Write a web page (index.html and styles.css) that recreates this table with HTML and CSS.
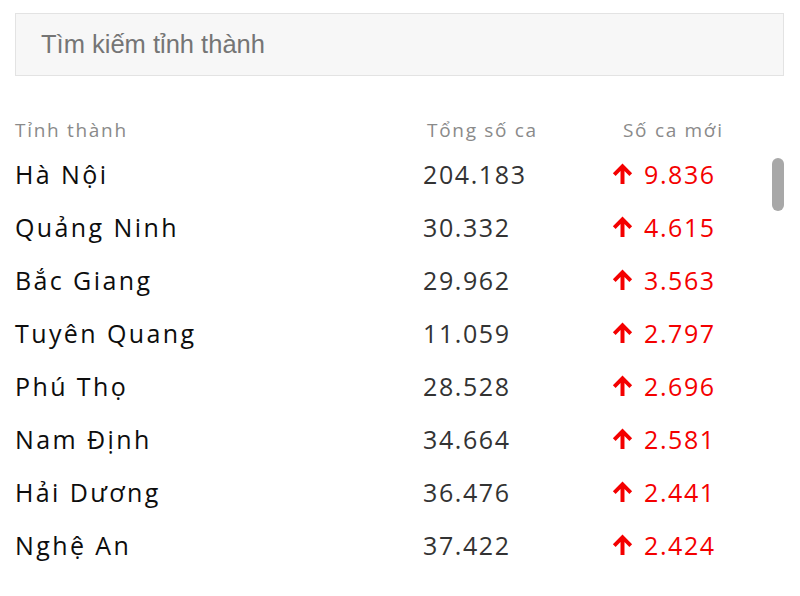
FILE: index.html
```html
<!DOCTYPE html>
<html lang="vi">
<head>
<meta charset="utf-8">
<link rel="stylesheet" href="styles.css">
</head>
<body>
<div class="page">
  <div class="search">Tìm kiếm tỉnh thành</div>
  <div class="table">
    <div class="row head">
      <div class="c-name">Tỉnh thành</div>
      <div class="c-total">Tổng số ca</div>
      <div class="c-new">Số ca mới</div>
    </div>
    <div class="body">
      <div class="row"><div class="c-name">Hà Nội</div><div class="c-total">204.183</div><div class="c-new"><svg class="up" viewBox="0 0 22 22"><path d="M11 1.5 L1.8 10.7 L4.4 13.3 L9.1 8.6 V21 H12.9 V8.6 L17.6 13.3 L20.2 10.7 Z"/></svg>9.836</div></div>
      <div class="row"><div class="c-name">Quảng Ninh</div><div class="c-total">30.332</div><div class="c-new"><svg class="up" viewBox="0 0 22 22"><path d="M11 1.5 L1.8 10.7 L4.4 13.3 L9.1 8.6 V21 H12.9 V8.6 L17.6 13.3 L20.2 10.7 Z"/></svg>4.615</div></div>
      <div class="row"><div class="c-name">Bắc Giang</div><div class="c-total">29.962</div><div class="c-new"><svg class="up" viewBox="0 0 22 22"><path d="M11 1.5 L1.8 10.7 L4.4 13.3 L9.1 8.6 V21 H12.9 V8.6 L17.6 13.3 L20.2 10.7 Z"/></svg>3.563</div></div>
      <div class="row"><div class="c-name">Tuyên Quang</div><div class="c-total">11.059</div><div class="c-new"><svg class="up" viewBox="0 0 22 22"><path d="M11 1.5 L1.8 10.7 L4.4 13.3 L9.1 8.6 V21 H12.9 V8.6 L17.6 13.3 L20.2 10.7 Z"/></svg>2.797</div></div>
      <div class="row"><div class="c-name">Phú Thọ</div><div class="c-total">28.528</div><div class="c-new"><svg class="up" viewBox="0 0 22 22"><path d="M11 1.5 L1.8 10.7 L4.4 13.3 L9.1 8.6 V21 H12.9 V8.6 L17.6 13.3 L20.2 10.7 Z"/></svg>2.696</div></div>
      <div class="row"><div class="c-name">Nam Định</div><div class="c-total">34.664</div><div class="c-new"><svg class="up" viewBox="0 0 22 22"><path d="M11 1.5 L1.8 10.7 L4.4 13.3 L9.1 8.6 V21 H12.9 V8.6 L17.6 13.3 L20.2 10.7 Z"/></svg>2.581</div></div>
      <div class="row"><div class="c-name">Hải Dương</div><div class="c-total">36.476</div><div class="c-new"><svg class="up" viewBox="0 0 22 22"><path d="M11 1.5 L1.8 10.7 L4.4 13.3 L9.1 8.6 V21 H12.9 V8.6 L17.6 13.3 L20.2 10.7 Z"/></svg>2.441</div></div>
      <div class="row"><div class="c-name">Nghệ An</div><div class="c-total">37.422</div><div class="c-new"><svg class="up" viewBox="0 0 22 22"><path d="M11 1.5 L1.8 10.7 L4.4 13.3 L9.1 8.6 V21 H12.9 V8.6 L17.6 13.3 L20.2 10.7 Z"/></svg>2.424</div></div>
      <div class="thumb"></div>
    </div>
  </div>
</div>
</body>
</html>
```
FILE: styles.css
```css
* { box-sizing: border-box; }
html, body { margin: 0; padding: 0; background: #fff; }
.page {
  width: 800px;
  height: 596px;
  padding: 13px 16px 0 15px;
  font-family: "Open Sans", "Noto Sans", sans-serif;
}
.search {
  height: 63px;
  border: 1px solid #e3e3e3;
  background: #f7f7f7;
  padding-left: 25px;
  display: flex;
  align-items: center;
  font-family: "Liberation Sans", Arial, sans-serif;
  font-size: 25.5px;
  color: #757575;
}
.table { margin-top: 36px; }
.body { position: relative; }
.row {
  display: grid;
  grid-template-columns: 408px 189px 1fr;
  height: 53px;
  align-items: center;
  font-size: 25px;
  letter-spacing: 1.6px;
}
.row.head {
  height: 36px;
  font-size: 19px;
  letter-spacing: 1.7px;
  margin-bottom: -1px;
}
.row.head .c-total { padding-left: 4px; }
.row.head .c-new { padding-left: 11px; }
.c-name { color: #0d0d0d; letter-spacing: 2.4px; }
.row.head .c-name, .row.head .c-total, .row.head .c-new { color: #8a8a8a; letter-spacing: 1.7px; }
.c-total { color: #333; }
.c-new {
  color: #f40000;
  display: flex;
  align-items: center;
}
.up {
  width: 23px;
  height: 23px;
  fill: #f40000;
  margin-left: -1px;
  margin-right: 10px;
}
.thumb {
  position: absolute;
  right: 0;
  top: 11px;
  width: 12px;
  height: 53px;
  border-radius: 6px;
  background: #a8a8a8;
}
```
